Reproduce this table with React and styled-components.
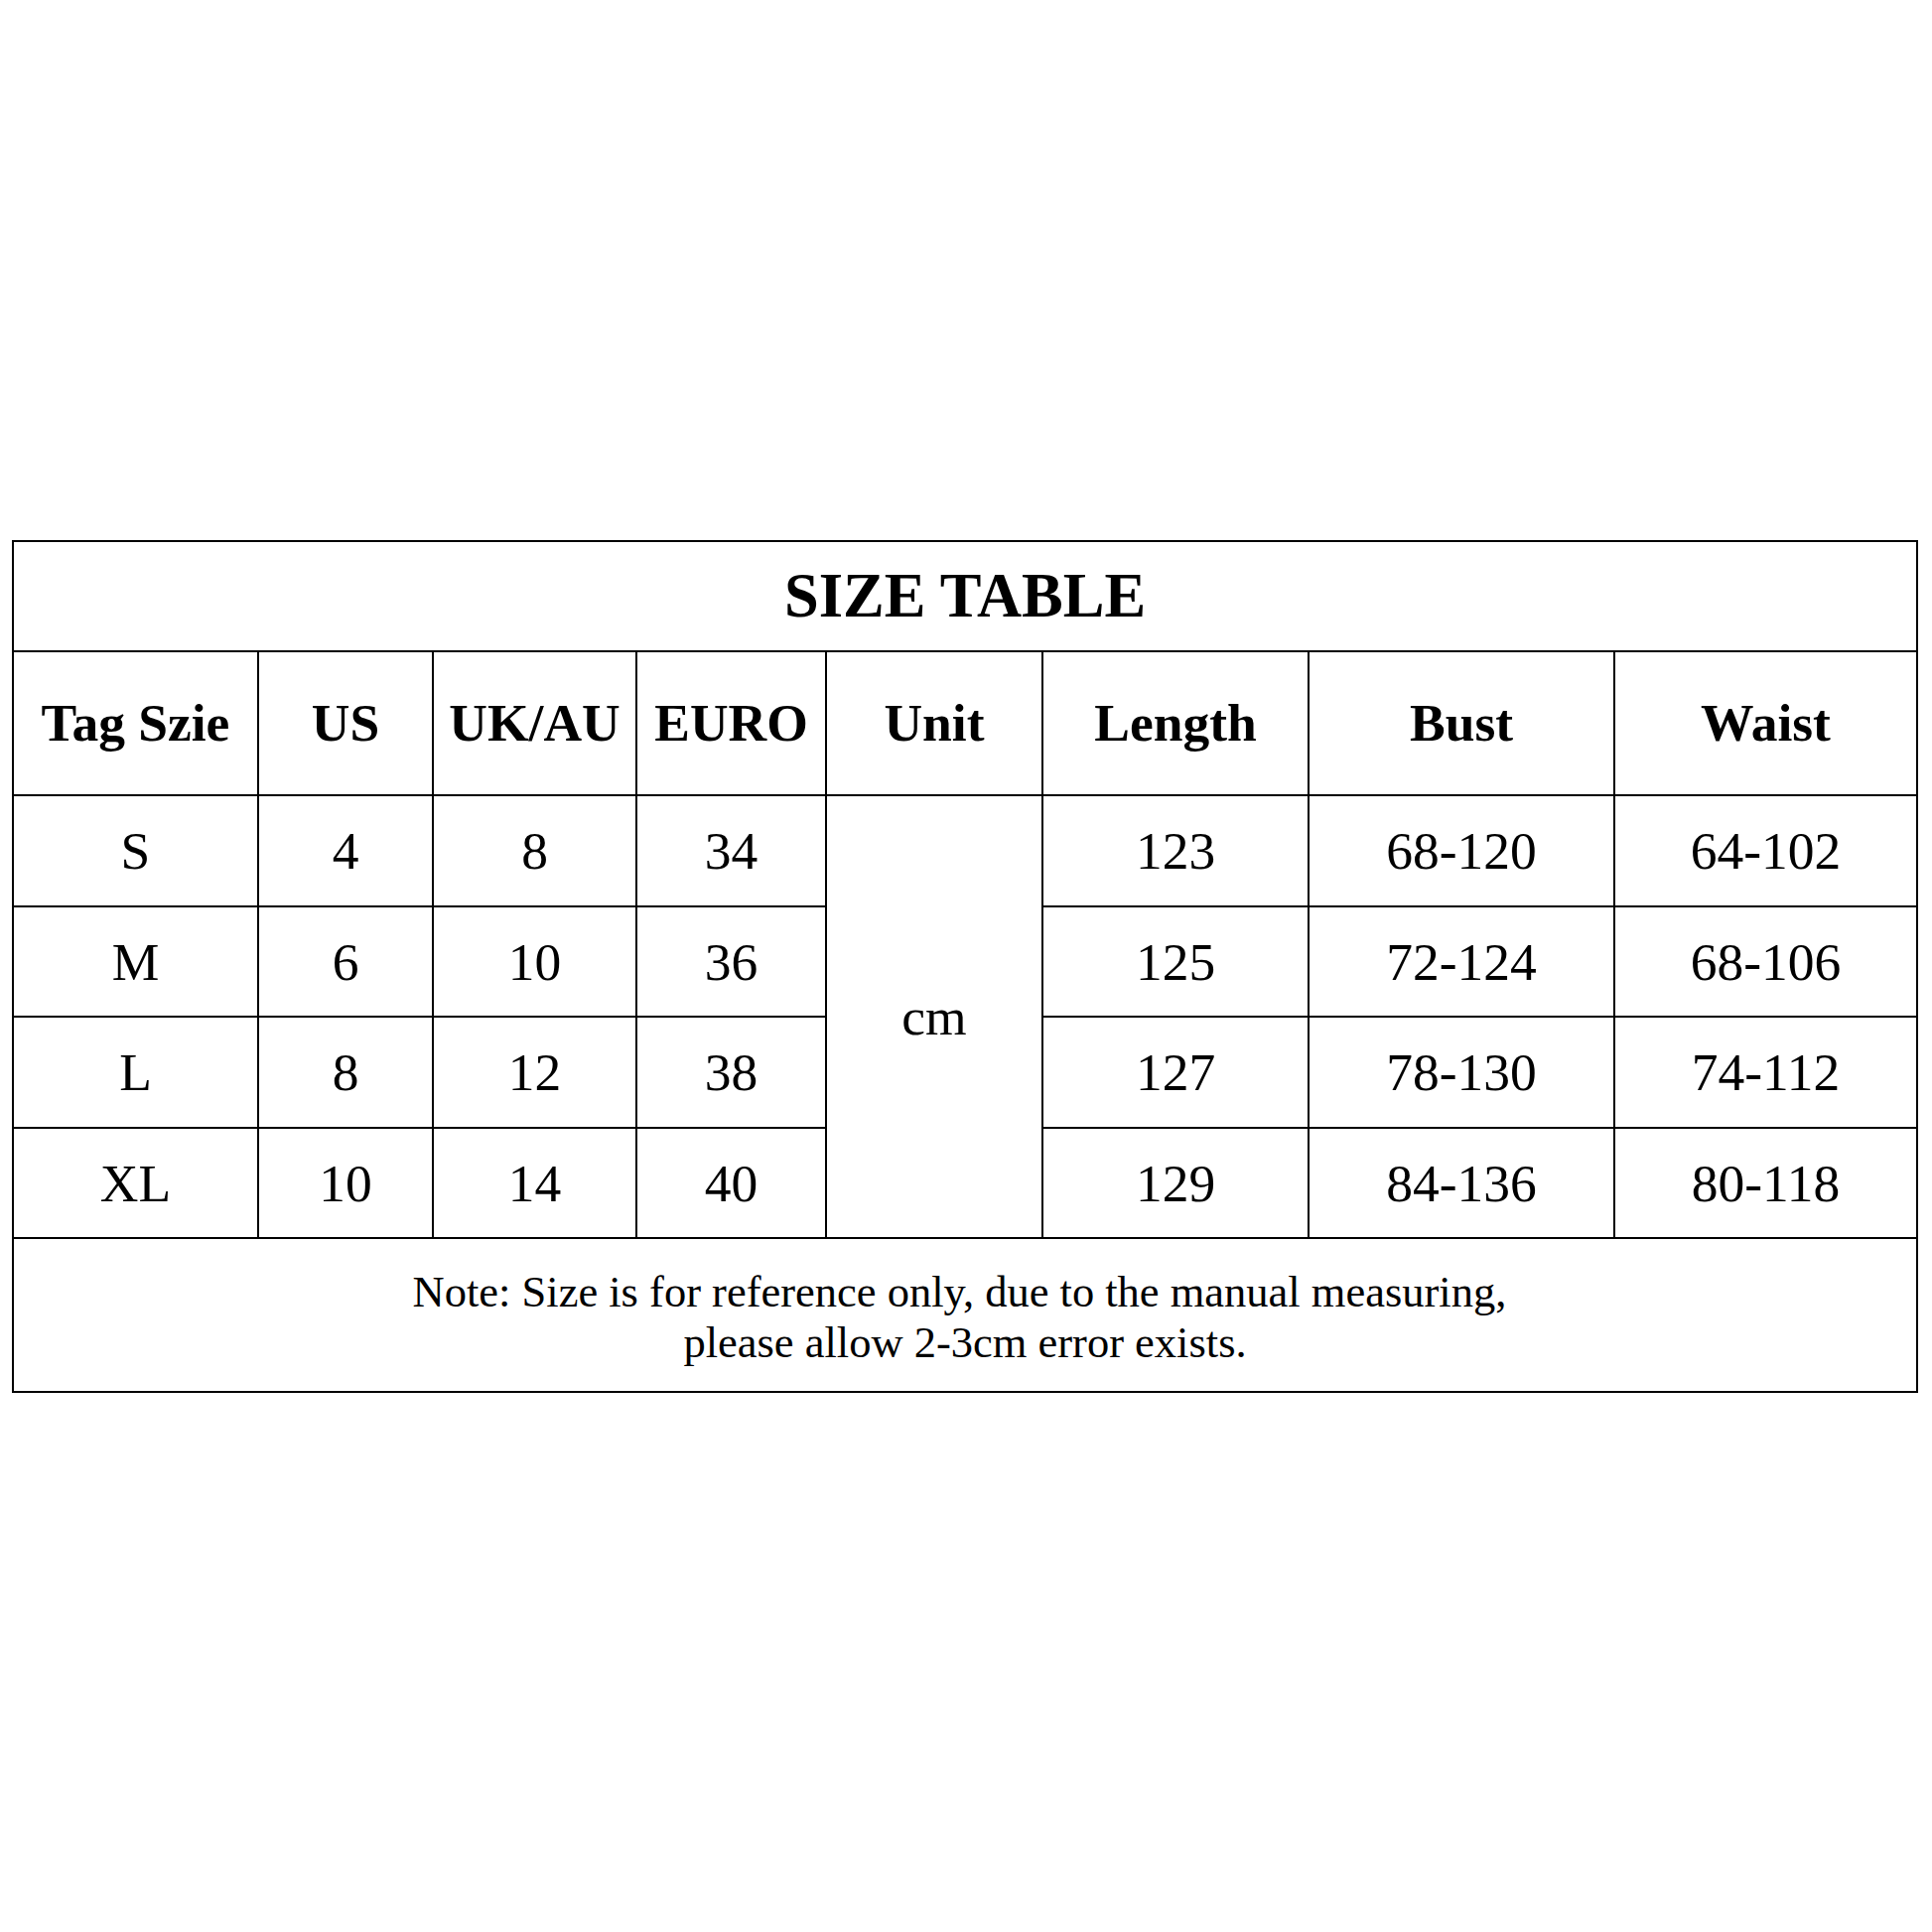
import React from 'react';
import styled, { createGlobalStyle } from 'styled-components';

const GlobalStyle = createGlobalStyle`
  html, body {
    margin: 0;
    padding: 0;
    background: #ffffff;
  }
  body {
    font-family: 'Liberation Serif', 'Times New Roman', serif;
    color: #000;
  }
`;

const headers = ['Tag Szie', 'US', 'UK/AU', 'EURO', 'Unit', 'Length', 'Bust', 'Waist'];

const rows = [
  ['S', '4', '8', '34', '123', '68-120', '64-102'],
  ['M', '6', '10', '36', '125', '72-124', '68-106'],
  ['L', '8', '12', '38', '127', '78-130', '74-112'],
  ['XL', '10', '14', '40', '129', '84-136', '80-118'],
];

const App = () => {
  return (
    <>
      <GlobalStyle />
      <Page>
        <Table>
          <Title>SIZE TABLE</Title>
          {headers.map((h) => (
            <HeadCell key={h}>{h}</HeadCell>
          ))}
          {rows.map((r, i) => (
            <React.Fragment key={r[0]}>
              {r.slice(0, 4).map((v, j) => (
                <Cell key={j}>{v}</Cell>
              ))}
              {i === 0 && <UnitCell>cm</UnitCell>}
              {r.slice(4).map((v, j) => (
                <Cell key={j + 4}>{v}</Cell>
              ))}
            </React.Fragment>
          ))}
          <Note>
            {'Note: Size is for reference only, due to the manual measuring,\u00a0'}
            <br />
            please allow 2-3cm error exists.
          </Note>
        </Table>
      </Page>
    </>
  );
};

export default App;

const Page = styled.div`
  width: 1946px;
  height: 1946px;
  box-sizing: border-box;
  padding: 544px 0 0 12px;
`;

const Table = styled.div`
  display: grid;
  width: 1920px;
  box-sizing: border-box;
  padding: 2px;
  gap: 2px;
  background: #000;
  grid-template-columns: 245px 174px 203px 189px 216px 266px 306px 303px;
  grid-template-rows: 109px 143px 110px 109px 110px 109px 153px;
`;

const Cell = styled.div`
  background: #fff;
  display: flex;
  align-items: center;
  justify-content: center;
  font-size: 53.5px;
  font-weight: 400;
  line-height: 1;
  padding-top: 2px;
`;

const HeadCell = styled(Cell)`
  font-size: 53.5px;
  font-weight: 700;
  padding-top: 0;
`;

const Title = styled(Cell)`
  grid-column: 1 / -1;
  font-size: 62.5px;
  font-weight: 700;
  padding-top: 0;
`;

const UnitCell = styled(Cell)`
  grid-column: 5;
  grid-row: 3 / span 4;
`;

const Note = styled(Cell)`
  grid-column: 1 / -1;
  flex-direction: column;
  text-align: center;
  font-size: 44.5px;
  line-height: 51px;
  padding-top: 4px;
  white-space: pre;
`;
